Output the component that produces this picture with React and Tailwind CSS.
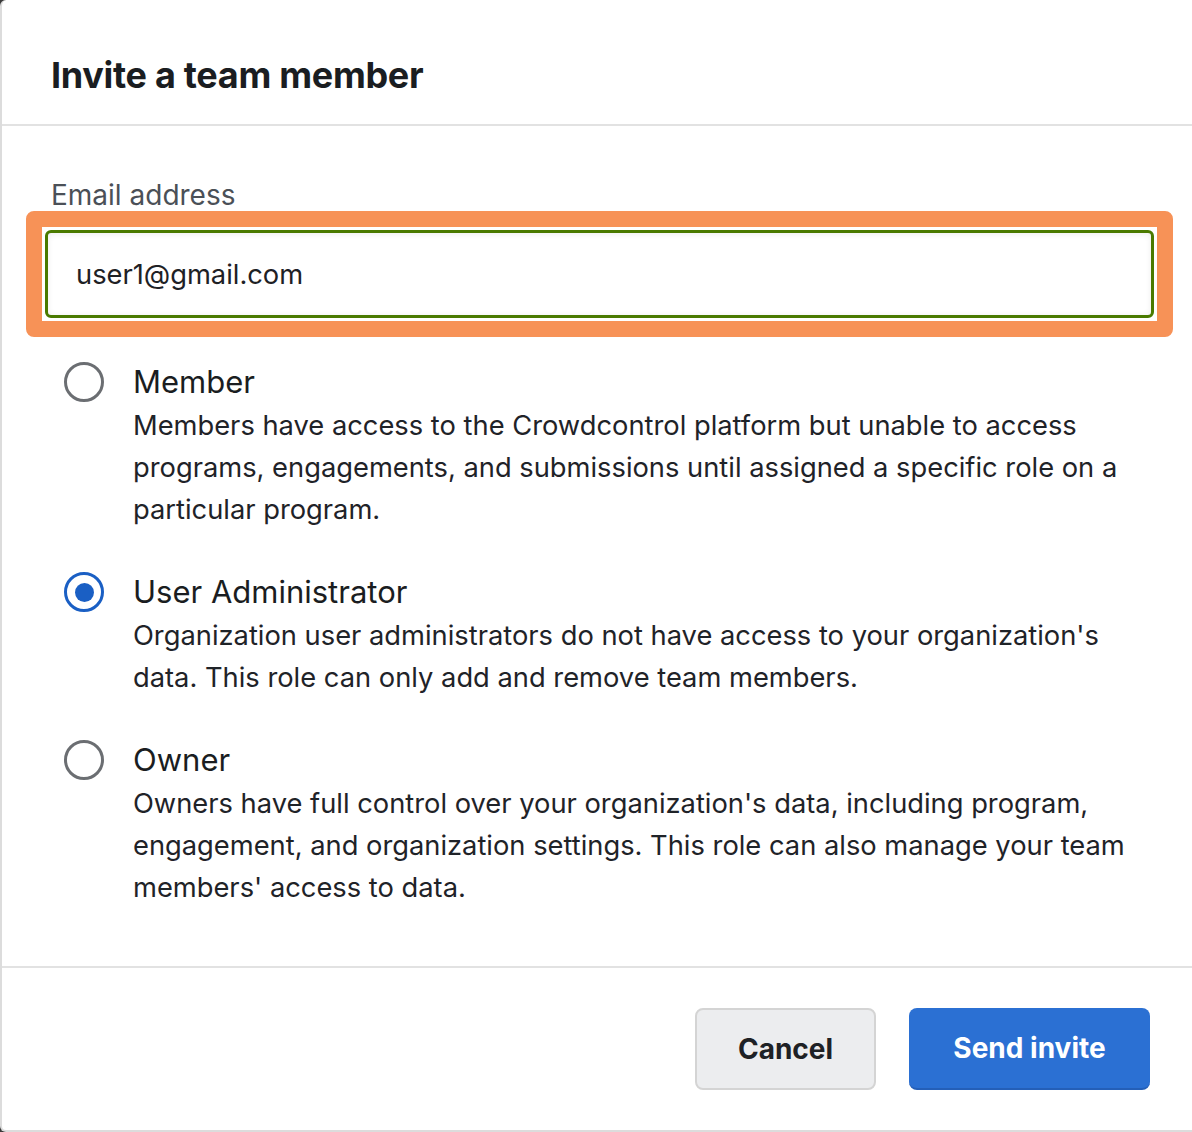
const roles = [
  {
    id: 'member',
    title: 'Member',
    lines: [
      'Members have access to the Crowdcontrol platform but unable to access',
      'programs, engagements, and submissions until assigned a specific role on a',
      'particular program.',
    ],
  },
  {
    id: 'user-admin',
    title: 'User Administrator',
    lines: [
      "Organization user administrators do not have access to your organization's",
      'data. This role can only add and remove team members.',
    ],
  },
  {
    id: 'owner',
    title: 'Owner',
    lines: [
      "Owners have full control over your organization's data, including program,",
      'engagement, and organization settings. This role can also manage your team',
      "members' access to data.",
    ],
  },
];

function Radio({ checked }) {
  return (
    <span
      className={
        'flex h-[40px] w-[40px] shrink-0 items-center justify-center rounded-full border-[3px] ' +
        (checked ? 'border-[#1a5fc4]' : 'border-[#6b6e72]')
      }
    >
      {checked && <span className="h-[19px] w-[19px] rounded-full bg-[#1a5fc4]" />}
    </span>
  );
}

export default function App() {
  const selected = 'user-admin';
  return (
    <div className="h-[1132px] w-[1192px] bg-[#3a3a3a] font-['Inter','Liberation_Sans',sans-serif] text-[#1f2328]">
      <div className="flex h-full flex-col rounded-l-[6px] border-b-2 border-l-2 border-[#dcdcdc] bg-white">
        <header className="h-[126px] shrink-0 border-b-2 border-[#e2e2e2] pl-[49px] pt-[53px]">
          <h1 className="text-[36px] font-bold leading-[44px] tracking-[-0.3px] text-[#1a1d21]">Invite a team member</h1>
        </header>

        <div className="flex-1 pt-[53px]">
          <label htmlFor="email" className="block pl-[49px] text-[28px] leading-[32px] text-[#4b5057]">
            Email address
          </label>
          <div className="ml-[24px] w-[1147px] rounded-[8px] border-[16px] border-[#f79257] bg-white p-[3px]">
            <input
              id="email"
              type="email"
              defaultValue="user1@gmail.com"
              className="block h-[88px] w-full rounded-[6px] border-[3px] border-[#4a7a00] bg-white px-[28px] text-[27.3px] text-[#1e2125] shadow-[inset_0_1px_6px_rgba(0,0,0,0.08)] outline-none"
            />
          </div>

          <div className="mt-[22px] flex flex-col gap-[38px] pl-[62px]">
            {roles.map((r) => (
              <label key={r.id} className="flex gap-[29px]">
                <span className="flex h-[46px] items-center">
                  <Radio checked={r.id === selected} />
                </span>
                <span className="flex flex-col">
                  <span className="text-[31px] leading-[46px] text-[#1a1d21]">{r.title}</span>
                  <span className="text-[27.3px] leading-[42px]">
                    {r.lines.map((l, i) => (
                      <span key={i} className="block whitespace-nowrap">
                        {l}
                      </span>
                    ))}
                  </span>
                </span>
              </label>
            ))}
          </div>
        </div>

        <footer className="flex shrink-0 justify-end gap-[33px] border-t-2 border-[#e2e2e2] pb-[40px] pr-[42px] pt-[40px]">
          <button className="h-[82px] w-[181px] rounded-[8px] border-2 border-[#d4d4d4] bg-[#ecedef] text-[28px] font-bold text-[#1e2125]">
            Cancel
          </button>
          <button className="h-[82px] w-[241px] rounded-[8px] border-b-2 border-[#245fb8] bg-[#2b70d3] text-[28px] font-bold text-white">
            Send invite
          </button>
        </footer>
      </div>
    </div>
  );
}
